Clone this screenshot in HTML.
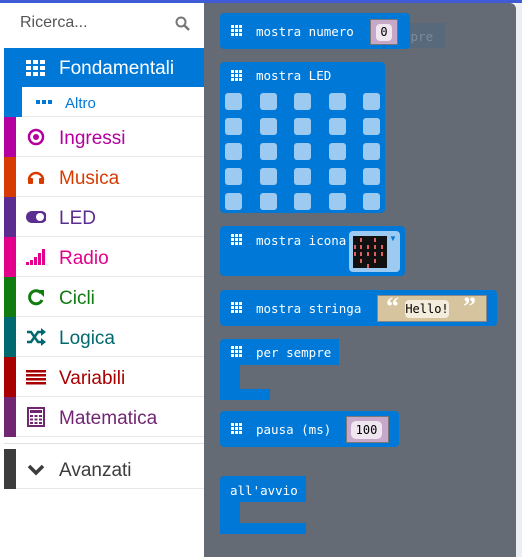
<!DOCTYPE html>
<html><head><meta charset="utf-8"><style>
*{margin:0;padding:0;box-sizing:border-box}
body{width:522px;height:557px;overflow:hidden;background:#fff;font-family:"Liberation Sans",sans-serif;position:relative}
.a{position:absolute}
.top{left:0;top:0;width:522px;height:3px;background:#3f5bd5}
.fly{left:204px;top:3px;width:312px;height:554px;background:#646b74;border-top-right-radius:6px}
.rs{left:516px;top:3px;width:6px;height:554px;background:#eceff1}
.row{position:absolute;left:4px;width:200px;height:40px;border-bottom:1px solid #e8e8e8}
.row .s{position:absolute;left:0;top:0;width:12px;height:40px}
.row .t{position:absolute;left:55px;top:11px;font-size:19px}
.row .i{position:absolute;left:22px;top:10px;width:20px;height:20px}
.b{position:absolute;background:#0078d7;border-radius:4px}
.m{position:absolute;font-family:"DejaVu Sans Mono","Liberation Mono",monospace;font-size:12.5px;color:#fff}
.led{position:absolute;width:17px;height:17px;background:#9ccaf0;border-radius:3px}
</style></head><body>
<div class="a top"></div>
<div class="a fly"></div>
<div class="a rs"></div>
<div class="a" style="left:20px;top:14px;font-size:16px;color:#555">Ricerca...</div>
<svg class="a" style="left:175px;top:16px" width="15" height="15" viewBox="0 0 15 15"><circle cx="6" cy="6" r="4.5" stroke="#777" stroke-width="2" fill="none"/><path d="M9.5 9.5L14 14" stroke="#777" stroke-width="2.5"/></svg>
<div class="row" style="top:48px;background:#0078d7;height:39px;border:none">
<svg class="a" style="left:22px;top:12px" width="20" height="16"><g fill="#fff"><rect x="0" y="0" width="5" height="4"/><rect x="7" y="0" width="5" height="4"/><rect x="14" y="0" width="5" height="4"/><rect x="0" y="6" width="5" height="4"/><rect x="7" y="6" width="5" height="4"/><rect x="14" y="6" width="5" height="4"/><rect x="0" y="12" width="5" height="4"/><rect x="7" y="12" width="5" height="4"/><rect x="14" y="12" width="5" height="4"/></g></svg>
<div class="t" style="color:#fff;top:10px">Fondamentali</div></div>
<div class="row" style="top:87px;height:30px"><div class="s" style="width:18px;height:30px;background:#0078d7"></div>
<svg class="a" style="left:32px;top:13px" width="16" height="5"><g fill="#0078d7"><rect width="4" height="4"/><rect x="6" width="4" height="4"/><rect x="12" width="4" height="4"/></g></svg>
<div class="a" style="left:61px;top:8px;font-size:15px;color:#0078d7">Altro</div></div>
<div class="row" style="top:117px"><div class="s" style="background:#b4009e"></div>
<svg class="i" viewBox="0 0 20 20"><circle cx="10" cy="10" r="7" stroke="#b4009e" stroke-width="2.5" fill="none"/><circle cx="10" cy="10" r="3" fill="#b4009e"/></svg>
<div class="t" style="color:#b4009e">Ingressi</div></div>
<div class="row" style="top:157px"><div class="s" style="background:#d83b01"></div>
<svg class="i" viewBox="0 0 20 20"><path d="M3 13A7 7 0 0 1 17 13" stroke="#d83b01" stroke-width="2.5" fill="none"/><rect x="2" y="11" width="5" height="6" rx="1" fill="#d83b01"/><rect x="13" y="11" width="5" height="6" rx="1" fill="#d83b01"/></svg>
<div class="t" style="color:#d83b01">Musica</div></div>
<div class="row" style="top:197px"><div class="s" style="background:#5c2d91"></div>
<svg class="i" viewBox="0 0 20 20"><rect x="0" y="4" width="21" height="12" rx="6" fill="#5c2d91"/><circle cx="14" cy="10" r="4" fill="#fff"/></svg>
<div class="t" style="color:#5c2d91">LED</div></div>
<div class="row" style="top:237px"><div class="s" style="background:#e3008c"></div>
<svg class="i" viewBox="0 0 20 20"><g fill="#e3008c"><rect x="0" y="15" width="3" height="3"/><rect x="4" y="13" width="3" height="5"/><rect x="8" y="10" width="3" height="8"/><rect x="12" y="6" width="3" height="12"/><rect x="16" y="2" width="3" height="16"/></g></svg>
<div class="t" style="color:#e3008c">Radio</div></div>
<div class="row" style="top:277px"><div class="s" style="background:#107c10"></div>
<svg class="i" viewBox="0 0 20 20"><path d="M15 6A6.5 6.5 0 1 0 16 13" stroke="#107c10" stroke-width="3" fill="none"/><path d="M11 3L18 3L18 10Z" fill="#107c10"/></svg>
<div class="t" style="color:#107c10">Cicli</div></div>
<div class="row" style="top:317px"><div class="s" style="background:#006970"></div>
<svg class="i" viewBox="0 0 20 20"><path d="M1 5H5L12 15H16M1 15H5L12 5H16" stroke="#006970" stroke-width="2.5" fill="none"/><path d="M15 1L20 5L15 9ZM15 11L20 15L15 19Z" fill="#006970"/></svg>
<div class="t" style="color:#006970">Logica</div></div>
<div class="row" style="top:357px"><div class="s" style="background:#a80000"></div>
<svg class="i" viewBox="0 0 20 20"><g fill="#a80000"><rect x="0" y="3" width="20" height="2.5"/><rect x="0" y="7" width="20" height="2.5"/><rect x="0" y="11" width="20" height="2.5"/><rect x="0" y="15" width="20" height="2.5"/></g></svg>
<div class="t" style="color:#a80000">Variabili</div></div>
<div class="row" style="top:397px"><div class="s" style="background:#712672"></div>
<svg class="i" viewBox="0 0 20 20"><rect x="2" y="1" width="16" height="18" stroke="#712672" stroke-width="2" fill="none"/><rect x="4" y="3" width="12" height="3" fill="#712672"/><g fill="#712672"><rect x="4" y="8" width="3" height="2"/><rect x="8.5" y="8" width="3" height="2"/><rect x="13" y="8" width="3" height="2"/><rect x="4" y="11.5" width="3" height="2"/><rect x="8.5" y="11.5" width="3" height="2"/><rect x="13" y="11.5" width="3" height="2"/><rect x="4" y="15" width="3" height="2"/><rect x="8.5" y="15" width="3" height="2"/><rect x="13" y="15" width="3" height="2"/></g></svg>
<div class="t" style="color:#712672">Matematica</div></div>
<div class="a" style="left:4px;top:443px;width:200px;height:1px;background:#e0e0e0"></div>
<div class="row" style="top:449px"><div class="s" style="background:#3c3c3c"></div>
<svg class="i" viewBox="0 0 20 20"><path d="M3 7L10 14L17 7" stroke="#3c3c3c" stroke-width="3.5" fill="none"/></svg>
<div class="t" style="color:#3c3c3c">Avanzati</div></div>

<div class="a" style="left:360px;top:23px;width:85px;height:25px;background:#59697c"></div>
<div class="m" style="left:403px;top:29px;color:#7b8a9c">mpre</div>
<div class="b" style="left:220px;top:13px;width:190px;height:36px"></div>
<svg class="a" style="left:231px;top:25px" width="12" height="11"><g fill="#fff"><rect width="3" height="3"/><rect x="4" width="3" height="3"/><rect x="8" width="3" height="3"/><rect y="4" width="3" height="3"/><rect x="4" y="4" width="3" height="3"/><rect x="8" y="4" width="3" height="3"/><rect y="8" width="3" height="3"/><rect x="4" y="8" width="3" height="3"/><rect x="8" y="8" width="3" height="3"/></g></svg>
<div class="m" style="left:256px;top:24px">mostra numero</div>
<div class="a" style="left:370px;top:19px;width:28px;height:26px;background:#c8a8c8;border:1px solid #777"></div>
<div class="a" style="left:376px;top:24px;width:16px;height:17px;background:#f0e6f0;border-radius:4px;font-family:'DejaVu Sans Mono',monospace;font-size:12px;text-align:center;line-height:17px">0</div>

<div class="b" style="left:220px;top:62px;width:165px;height:151px"></div>
<svg class="a" style="left:231px;top:70px" width="12" height="11"><g fill="#fff"><rect width="3" height="3"/><rect x="4" width="3" height="3"/><rect x="8" width="3" height="3"/><rect y="4" width="3" height="3"/><rect x="4" y="4" width="3" height="3"/><rect x="8" y="4" width="3" height="3"/><rect y="8" width="3" height="3"/><rect x="4" y="8" width="3" height="3"/><rect x="8" y="8" width="3" height="3"/></g></svg>
<div class="m" style="left:256px;top:68px">mostra LED</div>
<div id="leds"></div>

<div class="b" style="left:220px;top:226px;width:185px;height:50px"></div>
<svg class="a" style="left:231px;top:234px" width="12" height="11"><g fill="#fff"><rect width="3" height="3"/><rect x="4" width="3" height="3"/><rect x="8" width="3" height="3"/><rect y="4" width="3" height="3"/><rect x="4" y="4" width="3" height="3"/><rect x="8" y="4" width="3" height="3"/><rect y="8" width="3" height="3"/><rect x="4" y="8" width="3" height="3"/><rect x="8" y="8" width="3" height="3"/></g></svg>
<div class="m" style="left:256px;top:233px">mostra icona</div>
<div class="a" style="left:349px;top:231px;width:51px;height:41px;background:#9ccaf0;border-radius:4px"></div>
<svg class="a" style="left:353px;top:236px" width="34" height="32"><rect width="34" height="32" fill="#111"/><g fill="#e06060"><rect x="7" y="2" width="2" height="4"/><rect x="21" y="2" width="2" height="4"/><rect x="1" y="9" width="2" height="4"/><rect x="7" y="9" width="2" height="4"/><rect x="14" y="9" width="2" height="4"/><rect x="21" y="9" width="2" height="4"/><rect x="28" y="9" width="2" height="4"/><rect x="1" y="16" width="2" height="4"/><rect x="7" y="16" width="2" height="4"/><rect x="14" y="16" width="2" height="4"/><rect x="21" y="16" width="2" height="4"/><rect x="28" y="16" width="2" height="4"/><rect x="7" y="23" width="2" height="4"/><rect x="21" y="23" width="2" height="4"/><rect x="14" y="28" width="2" height="4"/></g></svg>
<div class="a" style="left:389px;top:234px;font-size:8px;color:#0078d7">▼</div>

<div class="b" style="left:220px;top:290px;width:277px;height:36px"></div>
<svg class="a" style="left:231px;top:302px" width="12" height="11"><g fill="#fff"><rect width="3" height="3"/><rect x="4" width="3" height="3"/><rect x="8" width="3" height="3"/><rect y="4" width="3" height="3"/><rect x="4" y="4" width="3" height="3"/><rect x="8" y="4" width="3" height="3"/><rect y="8" width="3" height="3"/><rect x="4" y="8" width="3" height="3"/><rect x="8" y="8" width="3" height="3"/></g></svg>
<div class="m" style="left:256px;top:301px">mostra stringa</div>
<div class="a" style="left:377px;top:295px;width:110px;height:27px;background:#d6c49e;border:1px solid #888"></div>
<div class="a" style="left:386px;top:292px;color:#fff;font-size:26px;font-weight:bold;font-family:'Liberation Serif',serif">“</div>
<div class="a" style="left:405px;top:300px;width:44px;height:18px;background:#f4ecdc;border-radius:4px;font-family:'DejaVu Sans Mono',monospace;font-size:12px;line-height:18px;text-align:center">Hello!</div>
<div class="a" style="left:463px;top:292px;color:#fff;font-size:26px;font-weight:bold;font-family:'Liberation Serif',serif">”</div>

<div class="b" style="left:220px;top:339px;width:119px;height:26px;border-radius:4px 0 0 0"></div>
<div class="a" style="left:220px;top:360px;width:20px;height:40px;background:#0078d7;border-radius:0 0 0 4px"></div>
<div class="a" style="left:220px;top:389px;width:50px;height:11px;background:#0078d7"></div>
<svg class="a" style="left:231px;top:346px" width="12" height="11"><g fill="#fff"><rect width="3" height="3"/><rect x="4" width="3" height="3"/><rect x="8" width="3" height="3"/><rect y="4" width="3" height="3"/><rect x="4" y="4" width="3" height="3"/><rect x="8" y="4" width="3" height="3"/><rect y="8" width="3" height="3"/><rect x="4" y="8" width="3" height="3"/><rect x="8" y="8" width="3" height="3"/></g></svg>
<div class="m" style="left:256px;top:345px">per sempre</div>

<div class="b" style="left:220px;top:411px;width:179px;height:36px"></div>
<svg class="a" style="left:231px;top:423px" width="12" height="11"><g fill="#fff"><rect width="3" height="3"/><rect x="4" width="3" height="3"/><rect x="8" width="3" height="3"/><rect y="4" width="3" height="3"/><rect x="4" y="4" width="3" height="3"/><rect x="8" y="4" width="3" height="3"/><rect y="8" width="3" height="3"/><rect x="4" y="8" width="3" height="3"/><rect x="8" y="8" width="3" height="3"/></g></svg>
<div class="m" style="left:256px;top:422px">pausa (ms)</div>
<div class="a" style="left:346px;top:416px;width:43px;height:27px;background:#c8a8c8;border:1px solid #777"></div>
<div class="a" style="left:351px;top:421px;width:31px;height:18px;background:#f0e6f0;border-radius:5px;font-family:'DejaVu Sans Mono',monospace;font-size:12px;text-align:center;line-height:18px">100</div>

<div class="b" style="left:220px;top:476px;width:86px;height:26px;border-radius:4px 0 0 0"></div>
<div class="a" style="left:220px;top:498px;width:20px;height:36px;background:#0078d7;border-radius:0 0 0 4px"></div>
<div class="a" style="left:220px;top:523px;width:86px;height:11px;background:#0078d7"></div>
<div class="m" style="left:230px;top:483px">all'avvio</div>

<script>
var h='',xs=[225,260,294,329,363],ys=[93,118,143,168,193];
ys.forEach(function(y){xs.forEach(function(x){h+='<div class="led" style="left:'+x+'px;top:'+y+'px"></div>'})});
document.getElementById('leds').innerHTML=h;
</script>
</body></html>
